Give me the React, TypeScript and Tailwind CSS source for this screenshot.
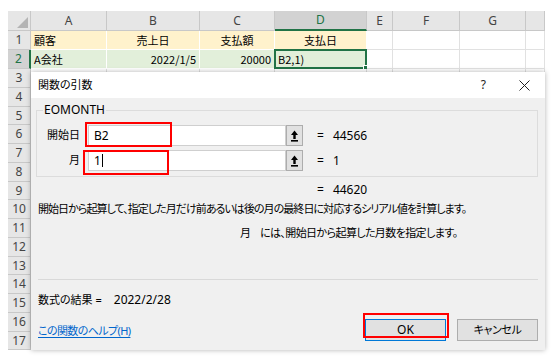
import React from "react";

const JP = "font-['Noto_Sans','Noto_Sans_CJK_JP',sans-serif] [font-feature-settings:'palt']";
const SHEETF = "font-['Noto_Sans_CJK_JP',sans-serif]";

const COLS = [
  { name: "A", w: "w-[76px]" },
  { name: "B", w: "w-[93px]" },
  { name: "C", w: "w-[75px]" },
  { name: "D", w: "w-[92px]" },
  { name: "E", w: "w-[26px]" },
  { name: "F", w: "w-[67px]" },
  { name: "G", w: "w-[66px]" },
  { name: "", w: "w-[19px]" },
];

const ROW_H = [
  "h-[19px]", "h-[19px]", "h-[19px]", "h-[19px]", "h-[18px]",
  "h-[19px]", "h-[19px]", "h-[19px]", "h-[18px]",
  "h-[19px]", "h-[19px]", "h-[19px]", "h-[18px]",
  "h-[19px]", "h-[19px]", "h-[19px]", "h-[18px]",
];

type Cell = { t: string; align: "l" | "c" | "r" };

const DATA: Record<number, Cell[]> = {
  1: [
    { t: "顧客", align: "l" },
    { t: "売上日", align: "c" },
    { t: "支払額", align: "c" },
    { t: "支払日", align: "c" },
  ],
  2: [
    { t: "A会社", align: "l" },
    { t: "2022/1/5", align: "r" },
    { t: "20000", align: "r" },
    { t: "B2,1)", align: "l" },
  ],
};

function Sheet() {
  return (
    <div className={`w-[537px] flex flex-col ${SHEETF} text-[11px] text-black`}>
      <div className="flex h-[20px]">
        <div className="w-[23px] h-full bg-[#e6e6e6] border-r border-b border-[#c8c8c8] flex items-end justify-end pr-[2px] pb-[2px]">
          <svg width="11" height="11" viewBox="0 0 11 11">
            <polygon points="11,0 11,11 0,11" fill="#b4b4b4" />
          </svg>
        </div>
        {COLS.map((c) => {
          const sel = c.name === "D";
          return (
            <div
              key={c.name + c.w}
              className={`${c.w} h-full flex items-center justify-center text-[12px] border-r ${
                sel
                  ? "bg-[#d2d2d2] text-[#217346] border-b-2 border-b-[#217346] border-r-[#c8c8c8]"
                  : "bg-[#e6e6e6] text-[#444] border-b border-[#c8c8c8]"
              } font-['Noto_Sans',sans-serif]`}
            >
              {c.name}
            </div>
          );
        })}
      </div>
      {ROW_H.map((h, i) => {
        const r = i + 1;
        const sel = r === 2;
        const data = DATA[r];
        return (
          <div key={r} className={`flex ${h}`}>
            <div
              className={`w-[23px] h-full flex items-center justify-center text-[12px] border-b border-[#c8c8c8] font-['Noto_Sans',sans-serif] ${
                sel
                  ? "bg-[#d2d2d2] text-[#217346] border-r-2 border-r-[#217346]"
                  : "bg-[#e6e6e6] text-[#444] border-r"
              }`}
            >
              {r}
            </div>
            {COLS.map((c, ci) => {
              const cell = data && ci < 4 ? data[ci] : undefined;
              const fill = cell
                ? r === 1
                  ? "bg-[#fff2cc] border-white"
                  : "bg-[#e2efda] border-white"
                : "bg-white border-[#e1e1e1]";
              const al = cell
                ? cell.align === "l"
                  ? "justify-start pl-[3px]"
                  : cell.align === "r"
                  ? "justify-end pr-[3px]"
                  : "justify-center"
                : "";
              const active = r === 2 && c.name === "D";
              return (
                <div
                  key={c.name + c.w}
                  className={`${c.w} h-full border-r border-b ${fill} flex items-center ${al} relative whitespace-nowrap overflow-visible`}
                >
                  {cell ? cell.t : ""}
                  {active && (
                    <div className="absolute -left-[1px] -top-[1px] -right-[1px] -bottom-[1px] border-2 border-[#217346]">
                      <div className="absolute -right-[3px] -bottom-[3px] w-[5px] h-[5px] bg-[#217346] border border-white" />
                    </div>
                  )}
                </div>
              );
            })}
          </div>
        );
      })}
    </div>
  );
}

function RefIcon() {
  return (
    <svg width="9" height="12" viewBox="0 0 9 12">
      <path d="M4.5 0.5 L8 5 H5.7 V9 H3.3 V5 H1 Z" fill="#000" />
      <rect x="1" y="10" width="7" height="1.6" fill="#000" />
    </svg>
  );
}

function ArgRow({ label, value, result, caret }: { label: string; value: string; result: string; caret?: boolean }) {
  return (
    <div className="flex items-center h-[21px]">
      <div className="w-[43px] text-right">{label}</div>
      <div className="ml-[8px] w-[198px] h-full bg-white border border-[#cfcfcf] pl-[5px] flex items-center text-[12px] font-['Noto_Sans',sans-serif]">
        <span>{value}</span>
        {caret && <span className="ml-[1px] w-[1px] h-[13px] bg-black" />}
      </div>
      <div className="w-[17px] h-full bg-[#e1e1e1] border border-[#adadad] flex items-center justify-center">
        <RefIcon />
      </div>
      <div className="ml-[14px] text-[12px]">=</div>
      <div className="ml-[9px] text-[12px] font-['Noto_Sans',sans-serif]">{result}</div>
    </div>
  );
}

function Dialog() {
  return (
    <div
      className={`absolute left-[31px] top-[72px] w-[514px] h-[278px] flex flex-col bg-[#f0f0f0] shadow-[0_0_5px_rgba(0,0,0,0.3)] ${JP} text-[11px] text-black`}
    >
      <div className="h-[26px] shrink-0 bg-white flex items-center pl-[7px]">
        <span>関数の引数</span>
        <span className="ml-auto mr-[33px] text-[12px] font-['Noto_Sans',sans-serif] text-[#222]">?</span>
        <svg className="mr-[15px]" width="11" height="11" viewBox="0 0 11 11">
          <path d="M0.5 0.5 L10.5 10.5 M10.5 0.5 L0.5 10.5" stroke="#222" strokeWidth="1" />
        </svg>
      </div>
      <div className="flex-1 flex flex-col">
        <fieldset className="mt-[4px] ml-[5px] mr-[7px] border border-[#dcdcdc] pt-[7px] pb-[5px] px-0">
          <legend className="ml-[6px] px-[1px] text-[12px] leading-[16px] font-['Noto_Sans',sans-serif]">EOMONTH</legend>
          <div className="flex flex-col gap-[4px]">
            <ArgRow label="開始日" value="B2" result="44566" />
            <ArgRow label="月" value="1" result="1" caret />
          </div>
        </fieldset>
        <div className="mt-[5px] h-[16px] pl-[286px] flex items-center text-[12px] font-['Noto_Sans',sans-serif]">
          <span>=</span>
          <span className="ml-[9px]">44620</span>
        </div>
        <div className="mt-[3px] h-[16px] pl-[7px] leading-[16px] whitespace-nowrap tracking-[-0.95px]">
          開始日から起算して、指定した月だけ前あるいは後の月の最終日に対応するシリアル値を計算します。
        </div>
        <div className="mt-[8px] h-[16px] pl-[209px] leading-[16px] whitespace-nowrap flex">
          <span>月</span>
          <span className="ml-[9px] tracking-[-0.6px]">には、開始日から起算した月数を指定します。</span>
        </div>
        <div className="mt-[38px] mx-[7px] border-t border-[#d9d9d9]" />
        <div className="mt-[12px] h-[16px] pl-[7px] leading-[16px] flex items-center whitespace-nowrap">
          <span>数式の結果 =</span>
          <span className="ml-[12px] text-[12px] font-['Noto_Sans',sans-serif]">2022/2/28</span>
        </div>
        <div className="mt-[11px] h-[22px] pl-[7px] pr-[7px] flex items-center">
          <span className="pt-[3px] text-[#0066cc] underline underline-offset-2 tracking-[-0.6px]">この関数のヘルプ(H)</span>
          <button className="ml-auto w-[81px] h-[22px] bg-[#e1e1e1] border border-[#0078d7] text-[12px] font-['Noto_Sans',sans-serif]">
            OK
          </button>
          <button className="ml-[11px] w-[81px] h-[22px] bg-[#e1e1e1] border border-[#adadad] tracking-[-0.4px]">キャンセル</button>
        </div>
      </div>
    </div>
  );
}

export default function App() {
  return (
    <div className="relative w-[560px] h-[361px] bg-white overflow-hidden">
      <div className="pt-[11px] pl-[8px]">
        <Sheet />
      </div>
      <Dialog />
      <div className="absolute left-[85px] top-[122px] w-[87px] h-[25px] border-2 border-[#ff0000]" />
      <div className="absolute left-[83px] top-[150px] w-[86px] h-[25px] border-2 border-[#ff0000]" />
      <div className="absolute left-[363px] top-[313px] w-[86px] h-[25px] border-2 border-[#ff0000]" />
    </div>
  );
}
